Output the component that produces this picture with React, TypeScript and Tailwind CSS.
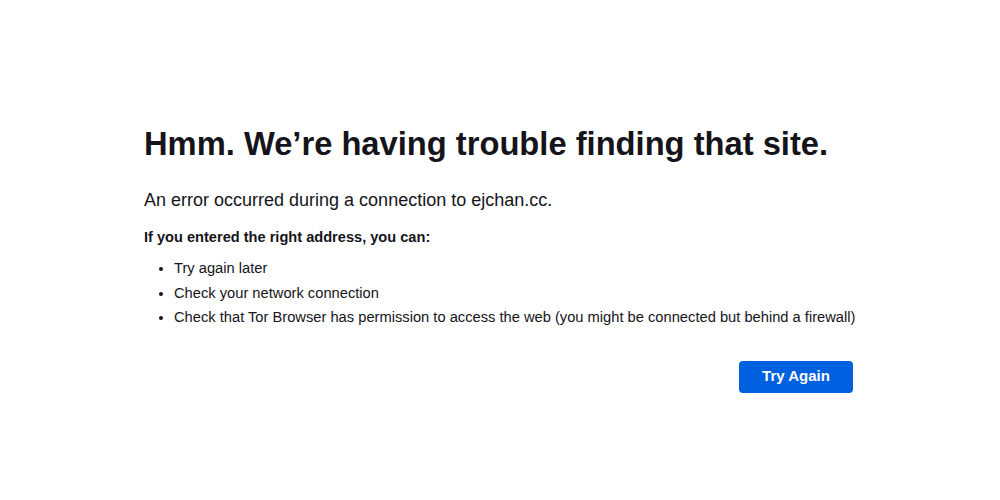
const items = [
  "Try again later",
  "Check your network connection",
  "Check that Tor Browser has permission to access the web (you might be connected but behind a firewall)",
];

export default function App() {
  return (
    <div className="w-[1000px] h-[500px] bg-white text-[#15141a] font-['Liberation_Sans',Arial,sans-serif] overflow-hidden">
      <div className="ml-[144px] w-[709px] pt-[124px]">
        <h1 className="text-[32.7px] font-bold leading-[40px]">
          Hmm. We’re having trouble finding that site.
        </h1>
        <p className="mt-[24px] text-[18px] leading-[24px]">
          An error occurred during a connection to ejchan.cc.
        </p>
        <p className="mt-[13px] text-[14.6px] font-bold leading-[24px]">
          If you entered the right address, you can:
        </p>
        <ul className="mt-[7px] pl-[30px] list-disc text-[14.7px] leading-[24.5px] whitespace-nowrap">
          {items.map((x, i) => (
            <li key={i}>{x}</li>
          ))}
        </ul>
        <div className="flex justify-end mt-[31px]">
          <button className="w-[114px] h-[32px] rounded-[4px] bg-[#0061e0] text-white text-[15px] font-bold">
            Try Again
          </button>
        </div>
      </div>
    </div>
  );
}
